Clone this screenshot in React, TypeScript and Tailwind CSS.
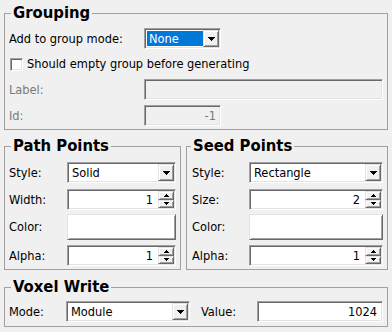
import React from "react";

const sunken =
  "border border-t-[#a0a0a0] border-l-[#a0a0a0] border-r-white border-b-white shadow-[inset_1px_1px_0_#696969,inset_-1px_-1px_0_#e3e3e3]";
const raised =
  "border border-t-[#e3e3e3] border-l-[#e3e3e3] border-r-[#696969] border-b-[#696969] shadow-[inset_1px_1px_0_#ffffff,inset_-1px_-1px_0_#a0a0a0]";

function Down({ w = 7 }: { w?: number }) {
  return (
    <svg width={w} height={4} viewBox="0 0 7 4" shapeRendering="crispEdges">
      <polygon points="0,0 7,0 3.5,4" fill="#000" />
    </svg>
  );
}
function Up() {
  return (
    <svg width={5} height={3} viewBox="0 0 5 3" shapeRendering="crispEdges">
      <polygon points="2.5,0 5,3 0,3" fill="#000" />
    </svg>
  );
}
function DownSmall() {
  return (
    <svg width={5} height={3} viewBox="0 0 5 3" shapeRendering="crispEdges">
      <polygon points="0,0 5,0 2.5,3" fill="#000" />
    </svg>
  );
}

function Combo({ value, className = "", focused = false }: { value: string; className?: string; focused?: boolean }) {
  return (
    <div className={`h-[21px] flex p-[1px] bg-white ${sunken} ${className}`}>
      <div className="flex-1 min-w-0 flex items-center pl-[1px] py-[1px]">
        <div
          className={
            focused
              ? "h-full flex-1 flex items-center pl-[2px] bg-[#0078d7] text-white"
              : "h-full flex-1 flex items-center pl-[2px]"
          }
        >
          {value}
        </div>
      </div>
      <div className={`w-[16px] h-full flex items-center justify-center bg-[#f0f0f0] ${raised}`}>
        <Down />
      </div>
    </div>
  );
}

function Spin({ value, className = "" }: { value: string; className?: string }) {
  return (
    <div className={`h-[21px] flex p-[1px] bg-white ${sunken} ${className}`}>
      <div className="flex-1 flex items-center justify-end pr-[5px]">{value}</div>
      <div className="w-[16px] h-full flex flex-col">
        <div className={`flex-1 flex items-center justify-center bg-[#f0f0f0] ${raised}`}>
          <Up />
        </div>
        <div className={`flex-1 flex items-center justify-center bg-[#f0f0f0] ${raised}`}>
          <DownSmall />
        </div>
      </div>
    </div>
  );
}

function Legend({ children, ml = "ml-[6px]" }: { children: React.ReactNode; ml?: string }) {
  return (
    <legend className={`${ml} px-[2px] text-[16.5px] font-bold leading-[18px] text-black`}>{children}</legend>
  );
}

export default function App() {
  return (
    <div className="w-[392px] h-[332px] bg-[#f0f0f0] px-[4px] pt-[4px] font-['DejaVu_Sans_Condensed','DejaVu_Sans',sans-serif] text-[12.7px] text-black overflow-hidden">
      {/* Grouping */}
      <fieldset className="border border-[#a0a0a0] m-0 p-0 min-w-0">
        <Legend>Grouping</Legend>
        <div className="pl-[4px] pr-[4px] pt-[6px] pb-[3px] flex flex-col">
          <div className="h-[21px] flex items-center">
            <div className="w-[135px]">Add to group mode:</div>
            <Combo value="None" focused className="w-[77px]" />
          </div>
          <div className="h-[30px] flex items-center">
            <div className={`w-[13px] h-[13px] bg-white ${sunken} ml-[1px]`} />
            <div className="ml-[4px]">Should empty group before generating</div>
          </div>
          <div className="h-[21px] flex items-center">
            <div className="w-[135px] text-[#787878]">Label:</div>
            <div className={`h-[21px] flex-1 bg-[#f0f0f0] ${sunken}`} />
          </div>
          <div className="h-[21px] flex items-center mt-[5px]">
            <div className="w-[135px] text-[#787878]">Id:</div>
            <div className={`h-[21px] w-[77px] bg-[#f0f0f0] flex items-center justify-end pr-[4px] text-[#787878] ${sunken}`}>
              -1
            </div>
          </div>
        </div>
      </fieldset>

      {/* Path / Seed */}
      <div className="flex gap-[5px] mt-[7px]">
        <fieldset className="border border-[#a0a0a0] m-0 p-0 min-w-0 w-[177px]">
          <Legend>Path Points</Legend>
          <div className="pl-[4px] pr-[4px] pt-[7px] pb-[3px] flex flex-col">
            <div className="h-[21px] flex items-center">
              <div className="w-[58px]">Style:</div>
              <Combo value="Solid" className="flex-1" />
            </div>
            <div className="h-[21px] flex items-center mt-[6px]">
              <div className="w-[58px]">Width:</div>
              <Spin value="1" className="flex-1" />
            </div>
            <div className="h-[26px] flex items-center mt-[4px]">
              <div className="w-[58px]">Color:</div>
              <div className={`h-[26px] flex-1 bg-white ${raised}`} />
            </div>
            <div className="h-[21px] flex items-center mt-[5px]">
              <div className="w-[58px]">Alpha:</div>
              <Spin value="1" className="flex-1" />
            </div>
          </div>
        </fieldset>
        <fieldset className="border border-[#a0a0a0] m-0 p-0 min-w-0 flex-1">
          <Legend ml="ml-[4px]">Seed Points</Legend>
          <div className="pl-[5px] pr-[4px] pt-[7px] pb-[3px] flex flex-col">
            <div className="h-[21px] flex items-center">
              <div className="w-[57px]">Style:</div>
              <Combo value="Rectangle" className="flex-1" />
            </div>
            <div className="h-[21px] flex items-center mt-[6px]">
              <div className="w-[57px]">Size:</div>
              <Spin value="2" className="flex-1" />
            </div>
            <div className="h-[26px] flex items-center mt-[4px]">
              <div className="w-[57px]">Color:</div>
              <div className={`h-[26px] flex-1 bg-white ${raised}`} />
            </div>
            <div className="h-[21px] flex items-center mt-[5px]">
              <div className="w-[57px]">Alpha:</div>
              <Spin value="1" className="flex-1" />
            </div>
          </div>
        </fieldset>
      </div>

      {/* Voxel Write */}
      <fieldset className="border border-[#a0a0a0] m-0 p-0 min-w-0 mt-[8px]">
        <Legend>Voxel Write</Legend>
        <div className="pl-[4px] pr-[4px] pt-[5px] pb-[4px] flex items-center">
          <div className="w-[57px]">Mode:</div>
          <Combo value="Module" className="w-[124px]" />
          <div className="w-[56px] ml-[11px]">Value:</div>
          <div className={`h-[21px] flex-1 bg-white flex items-center justify-end pr-[5px] ${sunken}`}>1024</div>
        </div>
      </fieldset>
    </div>
  );
}
